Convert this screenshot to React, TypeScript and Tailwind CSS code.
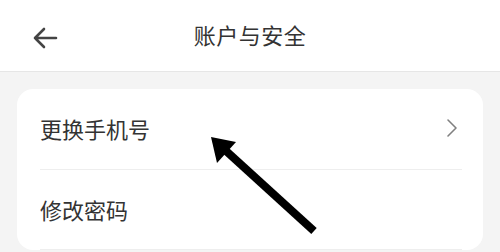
import { ChevronRight } from 'lucide-react';

const font = { fontFamily: '"Noto Sans CJK SC", "Noto Sans", sans-serif' };

export default function App() {
  return (
    <div className="w-[500px] h-[252px] overflow-hidden bg-[#f4f4f4] relative" style={font}>
      {/* 顶栏 */}
      <div className="h-[72px] bg-white border-b border-[#e6e6e6] flex items-center relative">
        <svg className="absolute left-[32px] top-[27px]" width="26" height="22" viewBox="0 0 26 22" fill="none">
          <path d="M24 11H3M12 2L3 11l9 9" stroke="#444" strokeWidth="2.6" strokeLinecap="round" strokeLinejoin="round" />
        </svg>
        <div className="w-full text-center text-[22px] text-[#333] tracking-[0.5px] -mt-[2px]">账户与安全</div>
      </div>

      {/* 卡片 */}
      <div className="mx-[17px] mt-[17px] bg-white rounded-[16px] pl-[23px] pr-[21px]">
        <div className="h-[81px] flex items-center justify-between border-b border-[#eeeeee]">
          <span className="text-[22px] text-[#333] -mt-[1px]">更换手机号</span>
          <ChevronRight size={32} strokeWidth={1.2} className="text-[#808080] -mr-[6px] -mt-[2px]" />
        </div>
        <div className="h-[80px] flex items-center justify-between border-b border-[#eeeeee]">
          <span className="text-[22px] text-[#333]">修改密码</span>
        </div>
      </div>

      {/* 指示箭头 */}
      <svg className="absolute left-0 top-0" width="500" height="252" viewBox="0 0 500 252">
        <line x1="314" y1="231" x2="225" y2="150" stroke="#000" strokeWidth="8" />
        <polygon points="211,137 236,142 217,163" fill="#000" />
      </svg>
    </div>
  );
}
